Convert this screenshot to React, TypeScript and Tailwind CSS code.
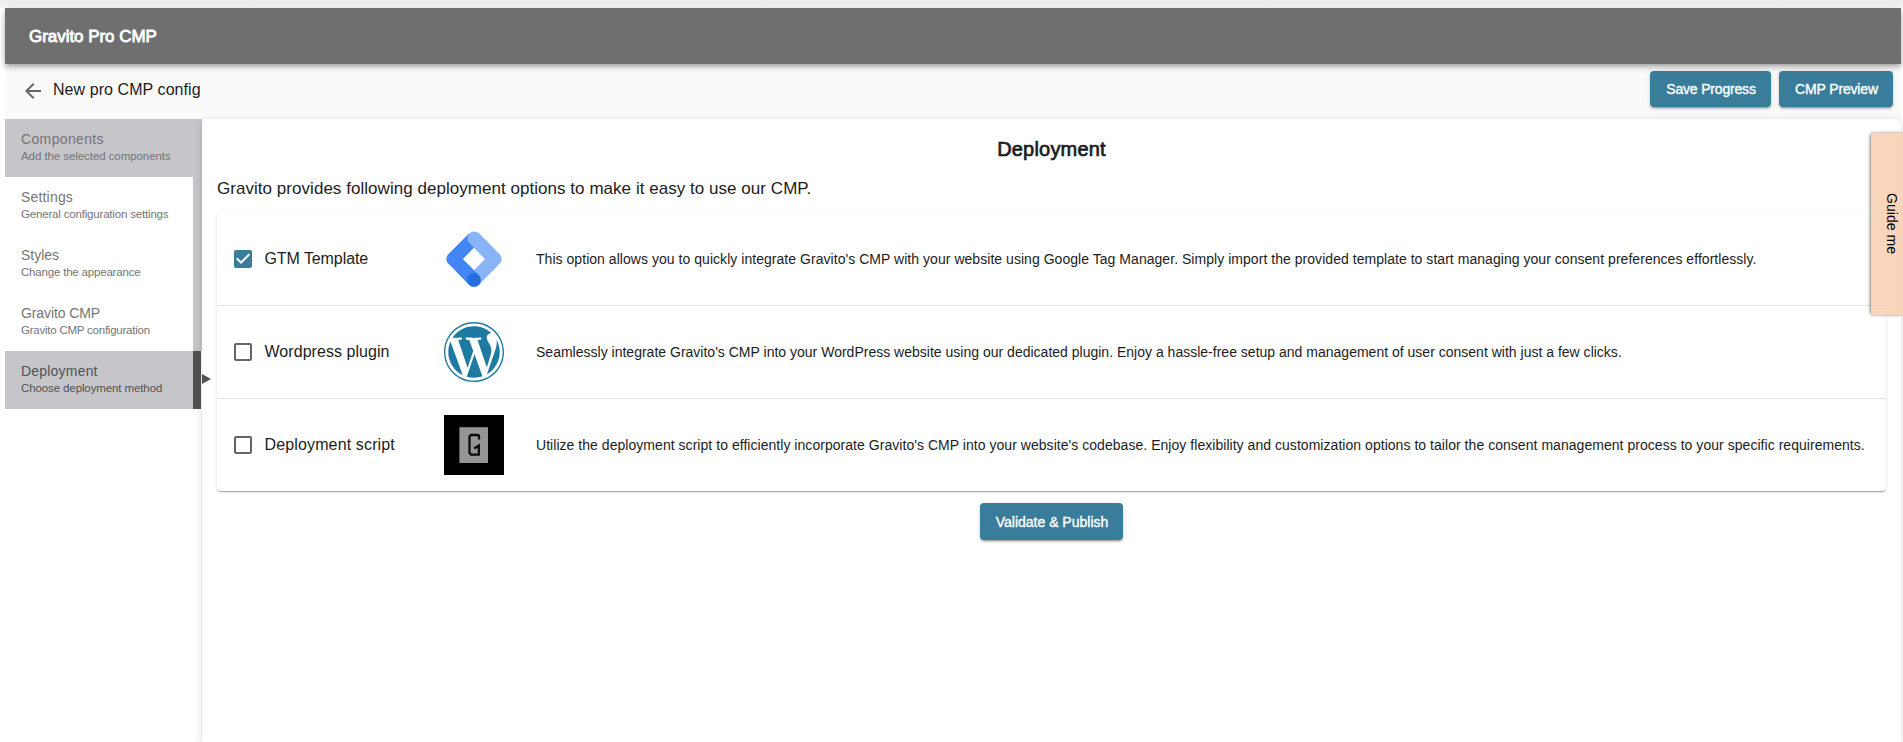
import { useState } from "react";
import type { ReactNode } from "react";

const steps = [
  { title: "Components", sub: "Add the selected components", ts: "tracking-[0.36px]", ss: "tracking-[-0.07px]", filled: true, active: false },
  { title: "Settings", sub: "General configuration settings", ts: "tracking-[0.18px]", ss: "tracking-[-0.18px]", filled: false, active: false },
  { title: "Styles", sub: "Change the appearance", ts: "tracking-[0px]", ss: "tracking-[-0.19px]", filled: false, active: false },
  { title: "Gravito CMP", sub: "Gravito CMP configuration", ts: "tracking-[-0.1px]", ss: "tracking-[-0.23px]", filled: false, active: false },
  { title: "Deployment", sub: "Choose deployment method", ts: "tracking-[0.2px]", ss: "tracking-[-0.11px]", filled: true, active: true },
];

function TagManagerLogo() {
  return (
    <svg width="60" height="60" viewBox="0 0 60 60">
      <path d="M34.8 4.2 55.7 25.2a6.6 6.6 0 0 1 0 9.4L34.8 55.9 25.2 45.9 41.1 30 25.2 13.8Z" fill="#8ab4f8" />
      <path d="M25.2 4.2 4.3 25.2a6.6 6.6 0 0 0 0 9.4L25.2 55.9 34.8 45.9 18.9 30 34.8 13.8Z" fill="#4285f4" />
      <path d="M34.8 4.2a6.8 6.8 0 0 0-9.6 9.6L41.1 30 50.5 20Z" fill="#8ab4f8" />
      <circle cx="30" cy="51" r="6.9" fill="#246fdb" />
    </svg>
  );
}

function WordpressLogo() {
  return (
    <svg width="60" height="60" viewBox="0 0 122.52 122.523" fill="#1f7aa2">
      <path d="m8.708 61.26c0 20.802 12.089 38.779 29.619 47.298l-25.069-68.686c-2.916 6.536-4.55 13.769-4.55 21.388z" />
      <path d="m96.74 58.608c0-6.495-2.333-10.993-4.334-14.494-2.664-4.329-5.161-7.995-5.161-12.324 0-4.831 3.664-9.328 8.825-9.328.233 0 .454.029.681.042-9.35-8.566-21.807-13.796-35.489-13.796-18.36 0-34.513 9.42-43.91 23.688 1.233.037 2.395.063 3.382.063 5.497 0 14.006-.667 14.006-.667 2.833-.167 3.167 3.994.337 4.329 0 0-2.847.335-6.015.501l19.138 56.925 11.501-34.493-8.188-22.434c-2.83-.166-5.511-.501-5.511-.501-2.832-.166-2.5-4.496.332-4.329 0 0 8.679.667 13.843.667 5.496 0 14.006-.667 14.006-.667 2.835-.167 3.168 3.994.337 4.329 0 0-2.853.335-6.015.501l18.992 56.494 5.242-17.517c2.272-7.269 4.001-12.49 4.001-16.989z" />
      <path d="m62.184 65.857-15.768 45.819c4.708 1.384 9.687 2.141 14.846 2.141 6.12 0 11.989-1.058 17.452-2.979-.141-.225-.269-.464-.374-.724z" />
      <path d="m107.376 36.046c.226 1.674.354 3.471.354 5.404 0 5.333-.996 11.328-3.996 18.824l-16.053 46.413c15.624-9.111 26.133-26.038 26.133-45.426.001-9.137-2.333-17.729-6.438-25.215z" />
      <path d="m61.262 0c-33.779 0-61.262 27.481-61.262 61.26 0 33.783 27.483 61.263 61.262 61.263 33.778 0 61.265-27.48 61.265-61.263-.001-33.779-27.487-61.26-61.265-61.26zm0 119.715c-32.23 0-58.453-26.223-58.453-58.455 0-32.23 26.222-58.451 58.453-58.451 32.229 0 58.45 26.221 58.45 58.451 0 32.232-26.221 58.455-58.45 58.455z" />
    </svg>
  );
}

function GravitoLogo() {
  return (
    <svg width="60" height="60" viewBox="0 0 60 60">
      <rect width="60" height="60" fill="#000" />
      <rect x="15.4" y="12.2" width="28.6" height="35.8" fill="#959595" />
      <path d="M35 24.6V21.2q0-1.2-1.2-1.2H27l-1.5 1.5V37.8L27 39.7h7.8V30.5l-4.6 3" fill="none" stroke="#0a0a0a" strokeWidth="2.3" />
    </svg>
  );
}

const options = [
  {
    name: "GTM Template", ns: "tracking-[-0.08px]", logo: <TagManagerLogo />, ds: "tracking-[0.041px]",
    text: "This option allows you to quickly integrate Gravito's CMP with your website using Google Tag Manager. Simply import the provided template to start managing your consent preferences effortlessly.",
  },
  {
    name: "Wordpress plugin", ns: "tracking-[0.05px]", logo: <WordpressLogo />, ds: "tracking-[0.007px]",
    text: "Seamlessly integrate Gravito's CMP into your WordPress website using our dedicated plugin. Enjoy a hassle-free setup and management of user consent with just a few clicks.",
  },
  {
    name: "Deployment script", ns: "tracking-[0.14px]", logo: <GravitoLogo />, ds: "tracking-[0.041px]",
    text: "Utilize the deployment script to efficiently incorporate Gravito's CMP into your website's codebase. Enjoy flexibility and customization options to tailor the consent management process to your specific requirements.",
  },
];

function CheckBox({ checked, onClick }: { checked: boolean; onClick: () => void }) {
  return (
    <button type="button" role="checkbox" aria-checked={checked} onClick={onClick} className="size-6 shrink-0">
      <svg width="24" height="24" viewBox="0 0 24 24" className="block">
        {checked ? (
          <path fill="#397d9a" d="M19 3H5c-1.11 0-2 .9-2 2v14c0 1.1.89 2 2 2h14c1.11 0 2-.9 2-2V5c0-1.1-.89-2-2-2zm-9 14l-5-5 1.41-1.41L10 14.17l7.59-7.59L19 8l-9 9z" />
        ) : (
          <path fill="#666" d="M19 5v14H5V5h14m0-2H5c-1.1 0-2 .9-2 2v14c0 1.1.9 2 2 2h14c1.1 0 2-.9 2-2V5c0-1.1-.9-2-2-2z" />
        )}
      </svg>
    </button>
  );
}

function Button({ className, children }: { className: string; children: ReactNode }) {
  return (
    <button
      type="button"
      className={`flex shrink-0 items-center justify-center rounded bg-[#397d9a] pl-px text-sm whitespace-nowrap text-white shadow-[0_3px_1px_-2px_rgba(0,0,0,0.2),0_2px_2px_0_rgba(0,0,0,0.14),0_1px_5px_0_rgba(0,0,0,0.12)] [-webkit-text-stroke:0.35px_white] ${className}`}
    >
      {children}
    </button>
  );
}

export default function App() {
  const [checked, setChecked] = useState([true, false, false]);
  const toggle = (i: number) => setChecked(checked.map((c, n) => (n === i ? !c : c)));

  return (
    <div className="relative flex h-[742px] w-full flex-col overflow-hidden bg-white pr-[2px] pl-[5px] font-['Liberation_Sans',Arial,sans-serif] text-[#1c1c1c]">
      <div className="-mr-[2px] -ml-[5px] h-2 shrink-0 bg-linear-to-b from-[#ebebeb] to-[#fafafa]" />
      <header className="relative z-10 flex h-14 shrink-0 items-center bg-[#6f6f6f] pt-0.5 pl-6 text-[17px] tracking-[-0.04px] text-white shadow-[0_2px_4px_-1px_rgba(0,0,0,0.2),0_4px_5px_0_rgba(0,0,0,0.14),0_1px_10px_0_rgba(0,0,0,0.12)] [-webkit-text-stroke:0.8px_white]">
        Gravito Pro CMP
      </header>
      <div className="flex h-[55px] shrink-0 items-start bg-[#fafafa] pr-2">
        <svg width="24" height="24" viewBox="0 0 24 24" className="mt-[15px] ml-4 shrink-0">
          <path fill="#666" d="M20 11H7.83l5.59-5.59L12 4l-8 8 8 8 1.41-1.41L7.83 13H20v-2z" />
        </svg>
        <h1 className="mt-[14px] ml-2 text-base leading-6 tracking-[0.07px]">New pro CMP config</h1>
        <div className="mt-[7px] ml-auto flex gap-2">
          <Button className="h-9 w-[121px] tracking-[-0.18px]">Save Progress</Button>
          <Button className="h-9 w-[114px] tracking-[-0.16px]">CMP Preview</Button>
        </div>
      </div>
      <div className="flex min-h-0 flex-1">
        <nav className="w-[197px] shrink-0">
          {steps.map((s) => (
            <div key={s.title} className={`flex h-[58px] ${s.active ? "text-[#525252]" : "text-[#757575]"}`}>
              <div className={`w-[188px] pt-[11px] pl-4 ${s.filled ? "bg-[#c6c5ca]" : "bg-white"}`}>
                <div className={`text-sm leading-[18px] ${s.ts}`}>{s.title}</div>
                <div className={`text-[11.5px] leading-4 whitespace-nowrap ${s.ss}`}>{s.sub}</div>
              </div>
              <div className={s.active ? "w-2 bg-[#525252]" : "w-[9px] bg-[#c6c5ca]"} />
            </div>
          ))}
        </nav>
        <main className="relative flex min-w-0 flex-1 flex-col rounded-t-lg bg-white px-[15px] shadow-[0_2px_1px_-1px_rgba(0,0,0,0.2),0_1px_1px_0_rgba(0,0,0,0.14),0_1px_8px_0_rgba(0,0,0,0.14)]">
          <svg width="9" height="10" viewBox="0 0 9 10" className="absolute top-[255px] left-0">
            <path d="M0 0 9 5 0 10Z" fill="#525252" />
          </svg>
          <h2 className="mt-[18px] text-center text-xl leading-6 tracking-[0.2px] [-webkit-text-stroke:0.7px_#1c1c1c]">Deployment</h2>
          <p className="mt-4 text-[17px] leading-6 tracking-[0.04px]">
            Gravito provides following deployment options to make it easy to use our CMP.
          </p>
          <section className="mt-3 rounded bg-white shadow-[0_2px_1px_-1px_rgba(0,0,0,0.2),0_1px_1px_0_rgba(0,0,0,0.14),0_1px_3px_0_rgba(0,0,0,0.12)]">
            {options.map((o, i) => (
              <div key={o.name} className="flex h-[93px] items-center border-b border-[#e0e0e0] pl-[14px] last:h-[92px] last:border-b-0">
                <CheckBox checked={checked[i]} onClick={() => toggle(i)} />
                <div className={`w-[180px] shrink-0 pl-[9.5px] text-base ${o.ns}`}>{o.name}</div>
                <div className="ml-[9px] w-[60px] shrink-0">{o.logo}</div>
                <div className={`ml-8 text-sm whitespace-nowrap ${o.ds}`}>{o.text}</div>
              </div>
            ))}
          </section>
          <div className="mt-3 flex justify-center">
            <Button className="h-[37px] w-[143px]">Validate &amp; Publish</Button>
          </div>
        </main>
      </div>
      <button
        type="button"
        className="absolute top-[133px] right-0 z-20 flex h-[182px] w-[32px] items-center justify-center rounded-l bg-[#f8ceaf]/85 pl-2.5 text-sm tracking-[0.04px] text-black shadow-[-1px_0_3px_0_rgba(0,0,0,0.5)] [writing-mode:vertical-rl]"
      >
        Guide me
      </button>
    </div>
  );
}
